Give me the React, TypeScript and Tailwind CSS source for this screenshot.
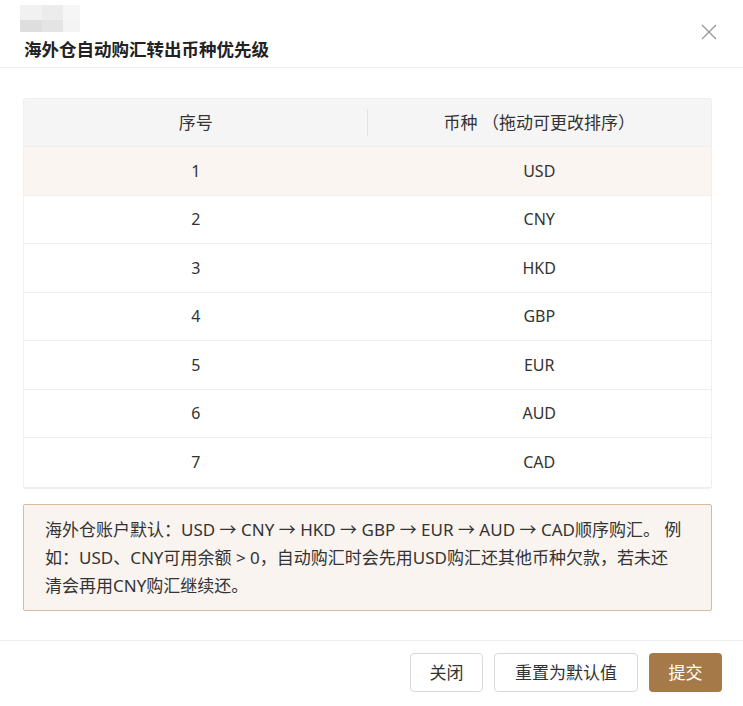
import React from "react";

const currencies = ["USD", "CNY", "HKD", "GBP", "EUR", "AUD", "CAD"];

const font = {
  fontFamily: '"Noto Sans", "Noto Sans CJK SC", sans-serif',
};

export default function App() {
  return (
    <div
      className="w-[743px] h-[706px] bg-white text-[#333] flex flex-col"
      style={font}
    >
      {/* Header */}
      <div className="relative h-[68px] border-b border-[#eeeeee] px-6 flex flex-col">
        {/* blurred placeholder */}
        <div className="flex flex-col mt-[5px] ml-[-4px] w-[60px]">
          <div className="flex h-[15px]">
            <div className="w-[22px] bg-[#f1f1f1]" />
            <div className="w-[21px] bg-[#ececec]" />
            <div className="w-[17px] bg-[#f6f6f6]" />
          </div>
          <div className="flex h-[12px]">
            <div className="w-[22px] bg-[#dedede]" />
            <div className="w-[21px] bg-[#e4e4e4]" />
            <div className="w-[17px] bg-[#f4f4f4]" />
          </div>
        </div>
        <h1 className="mt-[5px] text-[17.5px] leading-[24px] font-bold text-[#222]">
          海外仓自动购汇转出币种优先级
        </h1>
        <button className="absolute right-[26px] top-[24px] w-[16px] h-[16px] flex items-center justify-center">
          <svg width="16" height="16" viewBox="0 0 16 16" fill="none">
            <path d="M1 1L15 15M15 1L1 15" stroke="#999" strokeWidth="1.4" />
          </svg>
        </button>
      </div>

      {/* Body */}
      <div className="px-[23px] pt-[30px] flex-1">
        <div className="w-[689px] border border-[#efefef] border-b-2 rounded-[3px] overflow-hidden">
          <div className="flex h-[48px] bg-[#f5f5f5] border-b border-[#ededed] text-[17px]">
            <div className="w-1/2 flex items-center justify-center relative">
              序号
              <span className="absolute right-0 top-[10px] h-[27px] w-px bg-[#e3e3e3]" />
            </div>
            <div className="w-1/2 flex items-center justify-center">
              币种 （拖动可更改排序）
            </div>
          </div>
          {currencies.map((c, i) => (
            <div
              key={c}
              className={`flex h-[48.5px] text-[16px] ${
                i < currencies.length - 1 ? "border-b border-[#efefef]" : ""
              } ${i === 0 ? "bg-[#faf5f1]" : "bg-white"}`}
            >
              <div className="w-1/2 flex items-center justify-center">{i + 1}</div>
              <div className="w-1/2 flex items-center justify-center">{c}</div>
            </div>
          ))}
        </div>

        <div className="mt-[15px] w-[689px] h-[107px] border border-[#d6bc9d] rounded-[2px] bg-[#f9f4f0] pl-[21px] pr-[28px] pt-[11px] text-[17px] leading-[28px]">
          海外仓账户默认：USD → CNY → HKD → GBP → EUR → AUD → CAD顺序购汇。 例如：USD、CNY可用余额 &gt; 0，自动购汇时会先用USD购汇还其他币种欠款，若未还清会再用CNY购汇继续还。
        </div>
      </div>

      {/* Footer */}
      <div className="h-[66px] border-t border-[#eeeeee] flex justify-end items-start pt-[12px] pr-[21px] gap-[11px] text-[17px]">
        <button className="w-[73px] h-[39px] border border-[#d9d9d9] rounded-[4px] bg-white text-[#333]">
          关闭
        </button>
        <button className="w-[144px] h-[39px] border border-[#d9d9d9] rounded-[4px] bg-white text-[#333]">
          重置为默认值
        </button>
        <button className="w-[73px] h-[39px] rounded-[4px] bg-[#a57a48] text-white">
          提交
        </button>
      </div>
    </div>
  );
}
